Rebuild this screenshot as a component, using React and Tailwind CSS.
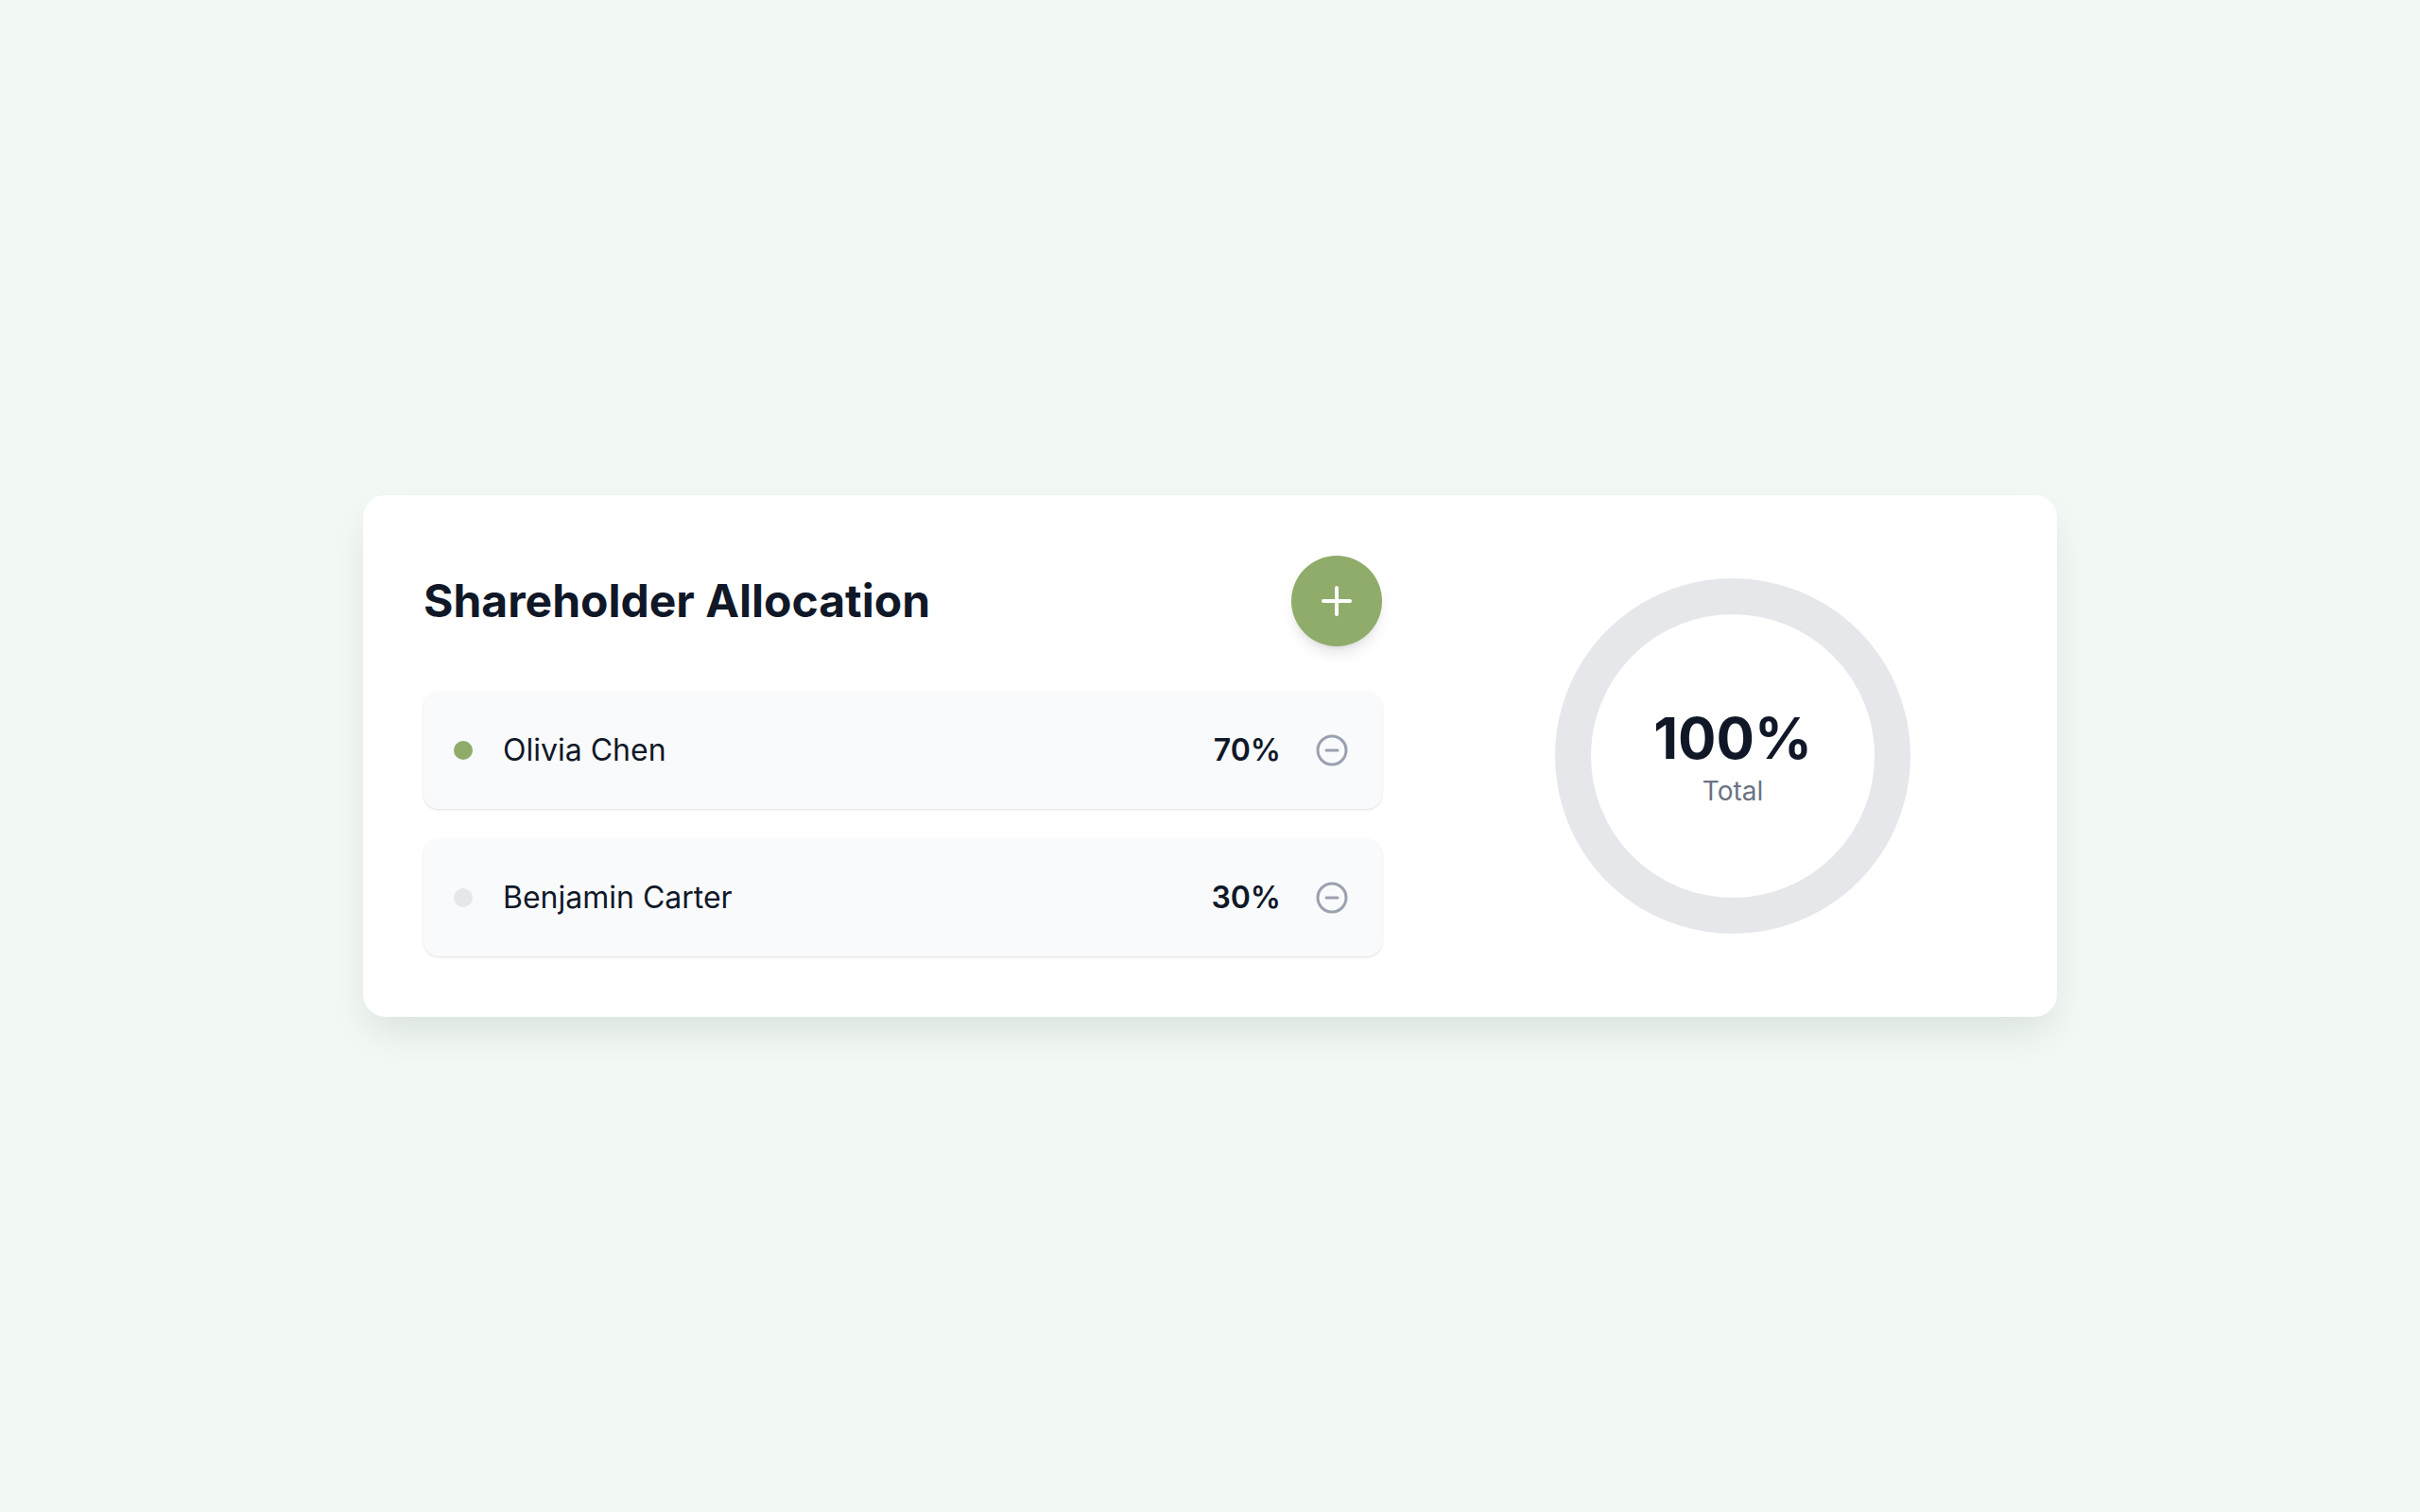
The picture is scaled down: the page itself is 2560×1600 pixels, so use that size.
import { Plus, CircleMinus } from "lucide-react"

const holders = [
  { name: "Olivia Chen", pct: 70, dot: "bg-[#8fac6a]" },
  { name: "Benjamin Carter", pct: 30, dot: "bg-gray-200" },
]

export default function App() {
  return (
    <div className="min-h-screen w-full bg-[#f2f8f4] flex items-center justify-center font-['Inter',sans-serif] text-gray-900">
      <div className="w-[1792px] bg-white rounded-3xl shadow-[0_20px_40px_-8px_rgba(30,60,40,0.12)] p-16 flex items-center">
        {/* Left: list */}
        <div className="w-[1014px] shrink-0">
          <div className="flex items-center justify-between mb-12">
            <h2 className="text-5xl font-bold">Shareholder Allocation</h2>
            <button className="w-24 h-24 rounded-full bg-[#8fac6a] text-white flex items-center justify-center shadow-lg">
              <Plus size={48} strokeWidth={2} />
            </button>
          </div>
          <div className="space-y-8">
            {holders.map((h) => (
              <div key={h.name} className="h-[124px] rounded-2xl bg-gray-50 shadow-sm pl-8 pr-[35px] flex items-center">
                <span className={`w-5 h-5 rounded-full ${h.dot}`} />
                <span className="ml-8 text-[32px] flex-1">{h.name}</span>
                <span className="text-[32px] font-semibold">{h.pct}%</span>
                <button className="ml-9 text-gray-400">
                  <CircleMinus size={36} strokeWidth={2} />
                </button>
              </div>
            ))}
          </div>
        </div>

        {/* Right: donut */}
        <div className="flex-1 flex justify-center pl-[92px]">
          <div className="relative w-[376px] h-[376px] pt-[6px] flex flex-col items-center justify-center">
            <svg className="absolute inset-0" width="376" height="376" viewBox="0 0 376 376">
              <circle cx="188" cy="188" r="169" fill="none" stroke="#e5e7eb" strokeWidth="38" />
            </svg>
            <div className="relative text-6xl font-bold leading-none">100%</div>
            <div className="relative mt-2 text-[28px] leading-9 text-gray-500">Total</div>
          </div>
        </div>
      </div>
    </div>
  )
}
